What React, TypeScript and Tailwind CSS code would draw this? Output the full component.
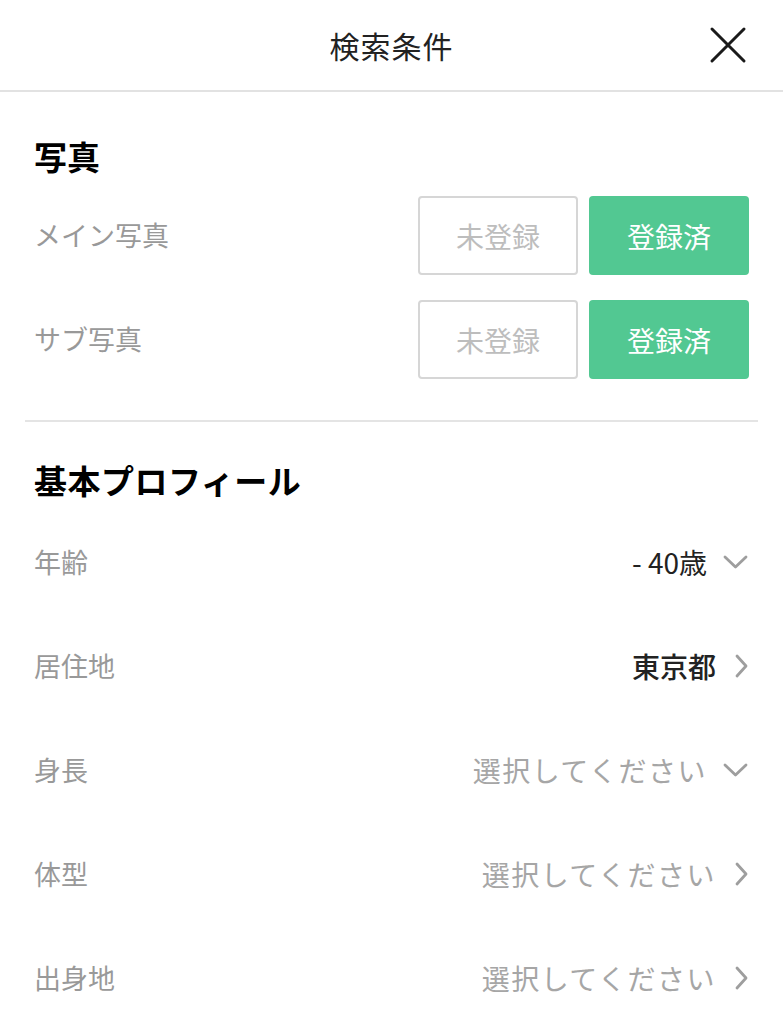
import React from "react";

const font = { fontFamily: '"Noto Sans CJK JP", "Noto Sans", sans-serif' };

const ChevronDown = () => (
  <svg width="25" height="14" viewBox="0 0 25 14" fill="none" stroke="#9e9e9e" strokeWidth="2.8" strokeLinecap="round" strokeLinejoin="round">
    <path d="M2 2 L12.5 12 L23 2" />
  </svg>
);

const ChevronRight = () => (
  <svg width="13" height="24" viewBox="0 0 13 24" fill="none" stroke="#9e9e9e" strokeWidth="2.8" strokeLinecap="round" strokeLinejoin="round">
    <path d="M2 2 L11 12 L2 22" />
  </svg>
);

const PhotoRow: React.FC<{ label: string }> = ({ label }) => (
  <div className="flex items-center justify-between h-[79px]">
    <span className="text-[27px] text-[#999999]">{label}</span>
    <div className="flex gap-[11px]">
      <div className="w-[160px] h-[79px] flex items-center justify-center border-2 border-[#d6d6d6] rounded-[4px] text-[28px] text-[#bdbdbd]">
        未登録
      </div>
      <div className="w-[160px] h-[79px] flex items-center justify-center rounded-[4px] bg-[#52c892] text-[28px] text-white">
        登録済
      </div>
    </div>
  </div>
);

type Item = { label: string; value: string; set?: boolean; bold?: boolean; icon: "down" | "right" };

const items: Item[] = [
  { label: "年齢", value: "- 40歳", set: true, icon: "down" },
  { label: "居住地", value: "東京都", set: true, bold: true, icon: "right" },
  { label: "身長", value: "選択してください", icon: "down" },
  { label: "体型", value: "選択してください", icon: "right" },
  { label: "出身地", value: "選択してください", icon: "right" },
];

export default function App() {
  return (
    <div className="w-[783px] h-[1024px] bg-white overflow-hidden" style={font}>
      <header className="h-[92px] border-b-2 border-[#e2e2e2] flex items-center justify-between px-[36px]">
        <div className="w-[38px]" />
        <h1 className="text-[30px] text-[#222222] tracking-[1px]">検索条件</h1>
        <svg width="38" height="38" viewBox="0 0 38 38" fill="none" stroke="#1a1a1a" strokeWidth="3" strokeLinecap="round">
          <path d="M3 3 L35 35 M35 3 L3 35" />
        </svg>
      </header>

      <section className="px-[34px] pt-[44px]">
        <h2 className="text-[33px] leading-[40px] font-bold text-black">写真</h2>
        <div className="mt-[20px] flex flex-col gap-[25px]">
          <PhotoRow label="メイン写真" />
          <PhotoRow label="サブ写真" />
        </div>
      </section>

      <div className="mx-[25px] mt-[41px] h-[2px] bg-[#e4e4e4]" />

      <section className="pl-[34px] pr-[35px] pt-[38px]">
        <h2 className="text-[33px] leading-[40px] font-bold text-black tracking-[0.5px]">基本プロフィール</h2>
        <div className="mt-[10px]">
          {items.map((it) => (
            <div key={it.label} className="h-[104px] flex items-center justify-between">
              <span className="text-[27px] text-[#999999]">{it.label}</span>
              <div className="flex items-center">
                <span
                  className={
                    it.set
                      ? `text-[28px] text-[#222222] ${it.bold ? "font-medium" : ""}`
                      : "text-[28px] text-[#a6a6a6] tracking-[1.5px]"
                  }
                >
                  {it.value}
                </span>
                <span className={it.icon === "down" ? "ml-[16px]" : "ml-[19px]"}>
                  {it.icon === "down" ? <ChevronDown /> : <ChevronRight />}
                </span>
              </div>
            </div>
          ))}
        </div>
      </section>
    </div>
  );
}
